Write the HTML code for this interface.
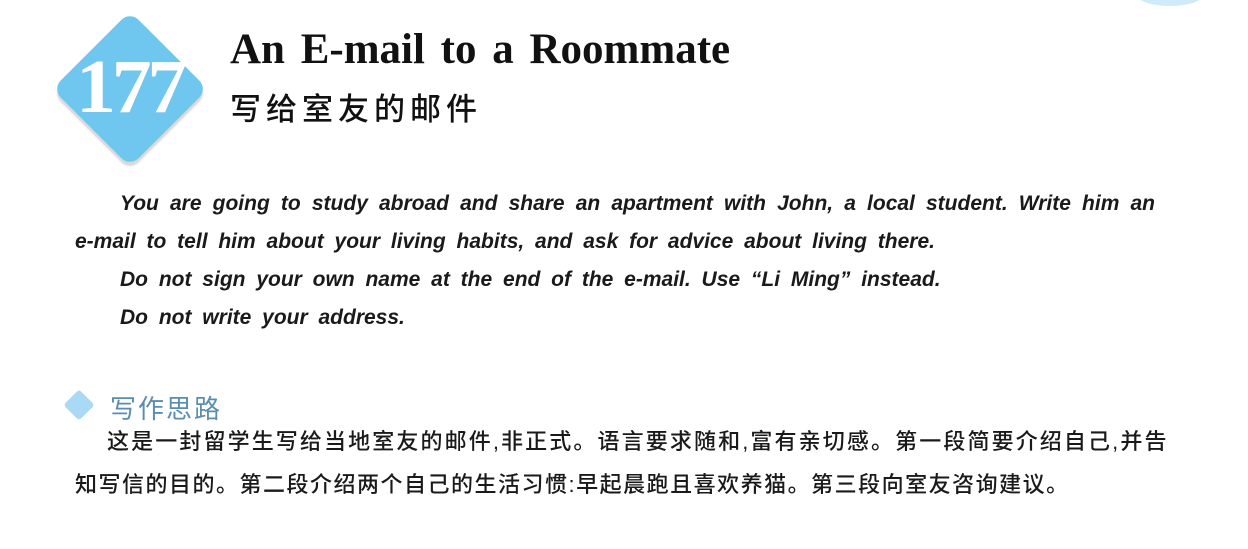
<!DOCTYPE html>
<html><head><meta charset="utf-8"><style>
body{margin:0;width:1248px;height:549px;background:#fff;position:relative;overflow:hidden;font-family:"Liberation Serif","Noto Serif CJK SC",serif}
.dia{position:absolute;left:75px;top:34px;width:110px;height:110px;background:#6fc6ee;border-radius:12px;transform:rotate(45deg);box-shadow:3px 3px 2px #d8d8d8}
.num{position:absolute;left:76px;top:44px;font-size:76px;color:#fff;font-weight:bold;letter-spacing:-4px;font-family:"Liberation Serif",serif;transform:scaleX(1.05);transform-origin:left}
.t1{position:absolute;left:230px;top:25px;font-size:43px;font-weight:bold;color:#111;white-space:nowrap;word-spacing:5px}
.t2{position:absolute;left:230px;top:84px;font-size:31px;color:#111;font-family:"Liberation Sans","Noto Sans CJK SC",sans-serif;font-weight:500;letter-spacing:5px}
.en{position:absolute;left:75px;top:185px;width:1080px;font-family:"Liberation Sans",sans-serif;font-style:italic;font-weight:bold;font-size:21px;word-spacing:5px;line-height:38px;color:#1a1a1a;text-align:justify}
.en p{margin:0;text-indent:45px}
.en p.j{text-align-last:justify;word-spacing:0}
.sd{position:absolute;left:68px;top:394px;width:22px;height:22px;background:#a9d9f5;transform:rotate(45deg);border-radius:3px}
.sh{position:absolute;left:110px;top:389px;font-size:26px;color:#5a8db0;font-family:"Liberation Sans","Noto Sans CJK SC",sans-serif;letter-spacing:2px}
.cn{position:absolute;left:75px;top:420px;width:1092px;font-size:22px;letter-spacing:0.5px;line-height:43px;color:#1a1a1a;font-family:"Liberation Sans","Noto Sans CJK SC",sans-serif;font-weight:500}
.cn p{margin:0;white-space:nowrap}
.cn p.j{text-indent:32px;text-align:justify;text-align-last:justify}
</style></head><body>
<div style="position:absolute;left:1135px;top:-20px;width:70px;height:26px;border-radius:50%;background:#cfeaf8"></div>
<div class="dia"></div>
<div class="num">177</div>
<div class="t1">An E-mail to a Roommate</div>
<div class="t2">写给室友的邮件</div>
<div class="en">
<p class="j">You are going to study abroad and share an apartment with John, a local student. Write him an</p>
<p style="text-indent:0">e-mail to tell him about your living habits, and ask for advice about living there.</p>
<p>Do not sign your own name at the end of the e-mail. Use “Li Ming” instead.</p>
<p>Do not write your address.</p>
</div>
<div class="sd"></div>
<div class="sh">写作思路</div>
<div class="cn"><p class="j" style="white-space:normal">这是一封留学生写给当地室友的邮件,非正式。语言要求随和,富有亲切感。第一段简要介绍自己,并告</p><p style="letter-spacing:1.5px">知写信的目的。第二段介绍两个自己的生活习惯:早起晨跑且喜欢养猫。第三段向室友咨询建议。</p></div>
</body></html>
